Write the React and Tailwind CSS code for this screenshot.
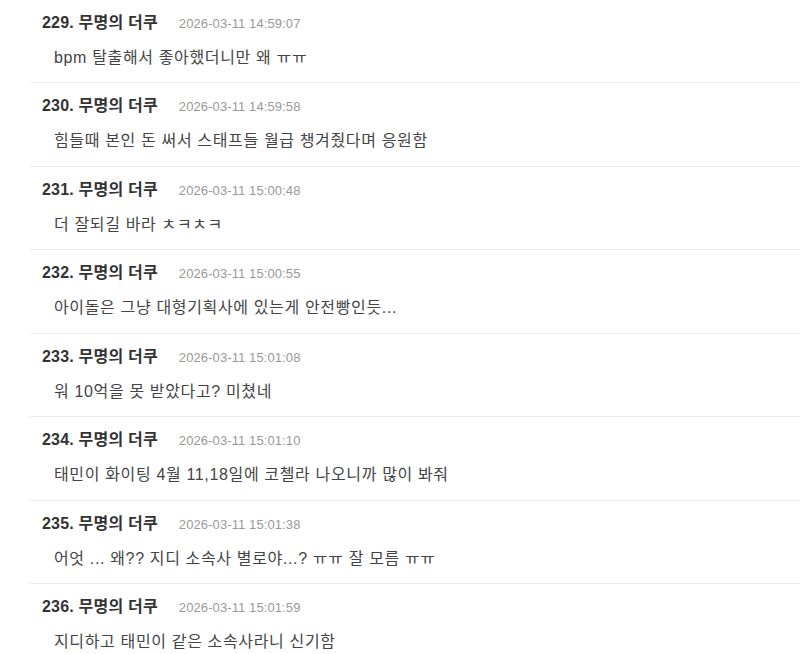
const comments = [
  { no: 229, date: '2026-03-11 14:59:07', text: 'bpm 탈출해서 좋아했더니만 왜 ㅠㅠ' },
  { no: 230, date: '2026-03-11 14:59:58', text: '힘들때 본인 돈 써서 스태프들 월급 챙겨줬다며 응원함' },
  { no: 231, date: '2026-03-11 15:00:48', text: '더 잘되길 바라 ㅊㅋㅊㅋ' },
  { no: 232, date: '2026-03-11 15:00:55', text: '아이돌은 그냥 대형기획사에 있는게 안전빵인듯...' },
  { no: 233, date: '2026-03-11 15:01:08', text: '워 10억을 못 받았다고? 미쳤네' },
  { no: 234, date: '2026-03-11 15:01:10', text: '태민이 화이팅 4월 11,18일에 코첼라 나오니까 많이 봐줘' },
  { no: 235, date: '2026-03-11 15:01:38', text: '어엇 ... 왜?? 지디 소속사 별로야...? ㅠㅠ 잘 모름 ㅠㅠ' },
  { no: 236, date: '2026-03-11 15:01:59', text: '지디하고 태민이 같은 소속사라니 신기함' },
];

/* ── one comment row ── */
function CommentRow({ c }) {
  return (
    <li className="border-b border-[#ebebeb] pl-3 pt-[14px] pb-[14.5px]">
      <div className="flex items-baseline h-[18px] leading-[18px]">
        <span className="font-bold text-[16px] tracking-[0.2px] text-[#333]">{c.no}. 무명의 더쿠</span>
        <span className="ml-[21px] text-[13px] tracking-[0.1px] text-[#999]">{c.date}</span>
      </div>
      <p className="mt-4 pl-3 text-[16px] tracking-[0.65px] leading-5 text-[#444]">{c.text}</p>
    </li>
  );
}

export default function App() {
  return (
    <div
      className="w-[800px] h-[654px] overflow-hidden bg-white"
      style={{ fontFamily: '"Liberation Sans", "Noto Sans CJK KR", sans-serif' }}
    >
      <ul className="ml-[30px] -mt-[0.5px]">
        {comments.map((c) => (
          <CommentRow key={c.no} c={c} />
        ))}
      </ul>
    </div>
  );
}
